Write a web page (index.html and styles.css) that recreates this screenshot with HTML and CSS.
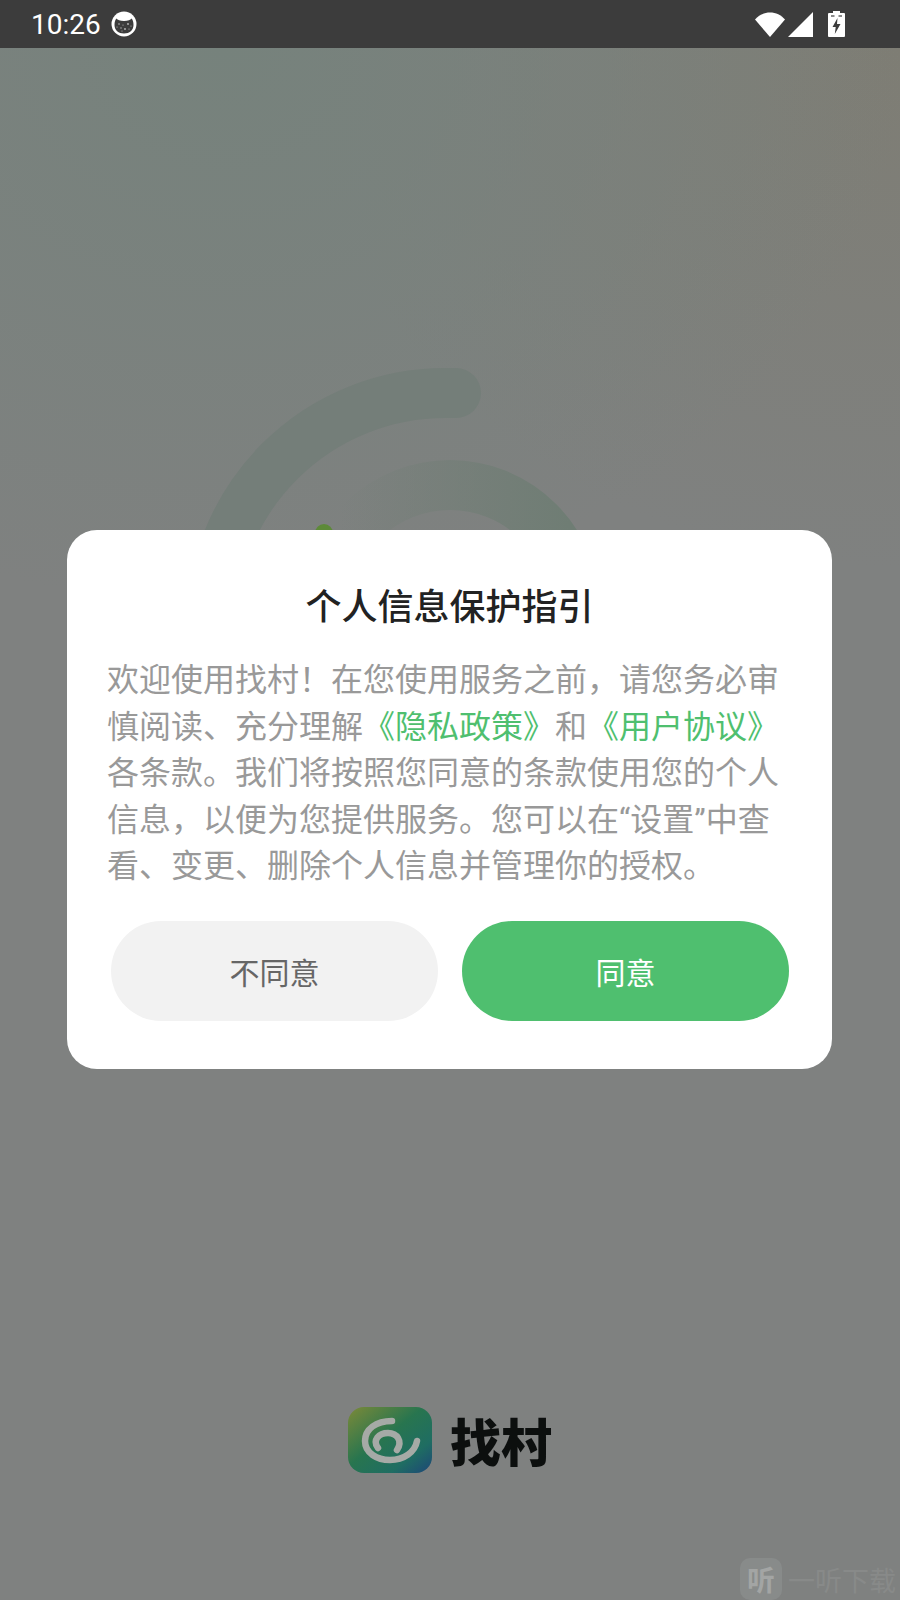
FILE: index.html
```html
<!DOCTYPE html>
<html lang="zh-Hans">
<head>
    <meta charset="UTF-8">
    <meta name="viewport" content="width=device-width, initial-scale=1.0">
    <title>找村</title>
    <link rel="stylesheet" href="styles.css">
</head>
<body>
    <div class="phone">
        <!-- Status bar -->
        <div class="status-bar">
            <div class="status-left">
                <span class="status-time">10:26</span>
                <svg class="status-cat" width="26" height="26" viewBox="0 0 26 26">
                    <circle cx="13" cy="13" r="12.5" fill="#fff"/>
                    <path d="M3.500 14c0-3 .8-5.500 2-6.500 1 1.500 3.500 2.500 7.500 2.500s6.500-1 7.500-2.500c1.200 1 2 3.500 2 6.500 0 5-4 8.500-9.500 8.500s-9.500-3.500-9.500-8.500z" fill="#3c3c3c"/>
                    <g fill="#bbb">
                        <circle cx="8" cy="13" r=".8"/>
                        <circle cx="12" cy="14" r=".6"/>
                        <circle cx="17" cy="13" r=".9"/>
                        <circle cx="20" cy="15" r=".6"/>
                        <circle cx="6" cy="16" r=".6"/>
                        <circle cx="10" cy="17" r=".7"/>
                        <circle cx="14" cy="18" r=".9"/>
                        <circle cx="18" cy="18" r=".6"/>
                        <circle cx="11" cy="20" r=".6"/>
                    </g>
                </svg>
            </div>
            <div class="status-right">
                <svg width="30" height="25" viewBox="0 0 30 25">
                    <path d="M0 7.500C4 3 9 0.500 15 0.500s11 2.500 15 7L15 25z" fill="#fff"/>
                </svg>
                <svg width="25" height="25" viewBox="0 0 25 25">
                    <path d="M25 0v25H0z" fill="#fff"/>
                </svg>
                <svg width="17" height="26" viewBox="0 0 17 26">
                    <path d="M5 0h7v2h4a1 1 0 0 1 1 1v22a1 1 0 0 1-1 1H1a1 1 0 0 1-1-1V3a1 1 0 0 1 1-1h4z" fill="#fff"/>
                    <path d="M3 4h3.500v2H3zM10.500 4H14v2h-3.500z" fill="#8a8a8a"/>
                    <path d="M9.500 7L4.500 16h3.200L6.800 23l5.700-10H9z" fill="#3c3c3c"/>
                </svg>
            </div>
        </div>

        <!-- Splash behind the dialog -->
        <div class="splash">
            <svg class="splash-art" width="900" height="1552" viewBox="0 48 900 1552">
                <defs>
                    <linearGradient id="ring-fade" x1="340" y1="0" x2="570" y2="0" gradientUnits="userSpaceOnUse">
                        <stop offset="0" stop-color="#6f7d74" stop-opacity="0"/>
                        <stop offset="1" stop-color="#6f7d74"/>
                    </linearGradient>
                </defs>
                <path d="M211 627A234 234 0 0 1 445 393H456" fill="none" stroke="#747e79" stroke-width="50" stroke-linecap="round"/>
                <path d="M325 610A125 125 0 0 1 575 610" fill="none" stroke="url(#ring-fade)" stroke-width="50"/>
                <circle cx="324" cy="533" r="9" fill="#5d8a38"/>
            </svg>
            <div class="brand">
                <svg class="brand-icon" width="84" height="66" viewBox="0 0 84 66">
                    <defs>
                        <linearGradient id="brand-bg" x1="0" y1="0" x2="1" y2="1">
                            <stop offset="0" stop-color="#7c8a38"/>
                            <stop offset="0.45" stop-color="#28754f"/>
                            <stop offset="0.75" stop-color="#1f6d62"/>
                            <stop offset="1" stop-color="#1d4678"/>
                        </linearGradient>
                    </defs>
                    <rect width="84" height="66" rx="16" fill="url(#brand-bg)"/>
                    <g fill="none" stroke="#a6aaa6" stroke-width="6.500" stroke-linecap="round">
                        <path d="M44 14C28 14 17 22 17 34C17 46 29 53 42 53C56 53 67 45 69 34"/>
                        <path d="M30 41C24 33 31 26 40 26C49 26 55 34 49 43"/>
                    </g>
                </svg>
                <span class="brand-name">找村</span>
            </div>
        </div>

        <!-- Watermark -->
        <div class="watermark">
            <span class="watermark-icon">听</span>
            <span class="watermark-text">一听下载</span>
        </div>

        <!-- Privacy dialog -->
        <div class="dialog">
            <h1 class="dialog-title">个人信息保护指引</h1>
            <p class="dialog-text">欢迎使用找村！在您使用服务之前，请您务必审慎阅读、充分理解<span class="link">《隐私政策》</span>和<span class="link">《用户协议》</span>各条款。我们将按照您同意的条款使用您的个人信息，以便为您提供服务。您可以在<span class="quote">“</span>设置<span class="quote">”</span>中查看、变更、删除个人信息并管理你的授权。</p>
            <div class="dialog-buttons">
                <button class="btn btn-decline">不同意</button>
                <button class="btn btn-accept">同意</button>
            </div>
        </div>
    </div>
</body>
</html>
```

FILE: styles.css
```css
* {
    box-sizing: border-box;
}

body {
    margin: 0;
    font-family: "Noto Sans CJK SC", "Noto Sans", sans-serif;
    background-color: #808080;
}

.phone {
    position: relative;
    width: 900px;
    height: 1600px;
    overflow: hidden;
    display: flex;
    flex-direction: column;
}

/* Status bar */
.status-bar {
    height: 48px;
    flex-shrink: 0;
    background-color: #3c3c3c;
    display: flex;
    justify-content: space-between;
    align-items: center;
    padding: 0 55px 0 31px;
}

.status-left {
    display: flex;
    align-items: center;
    gap: 10px;
}

.status-time {
    font-family: Roboto, sans-serif;
    font-size: 28px;
    color: #fff;
}

.status-right {
    display: flex;
    align-items: center;
    gap: 3px;
}

.status-right svg:last-child {
    margin-left: 12px;
}

/* Splash */
.splash {
    position: relative;
    flex: 1;
    display: flex;
    justify-content: center;
    align-items: flex-end;
    padding: 0 0 127px 0;
    background-color: #7f8180;
    background-image: radial-gradient(ellipse 680px 560px at 25% 0, #76827c 0%, rgba(118, 130, 124, 0) 100%),
        radial-gradient(ellipse 600px 520px at 100% 0, #7e7d74 0%, rgba(126, 125, 116, 0) 100%);
}

.splash-art {
    position: absolute;
    left: 0;
    top: 0;
}

.brand {
    position: relative;
    display: flex;
    align-items: center;
    gap: 18px;
}

.brand-name {
    font-size: 51px;
    font-weight: 900;
    line-height: 64px;
    color: #0c0f0e;
}

/* Watermark */
.watermark {
    position: absolute;
    left: 740px;
    bottom: 0;
    display: flex;
    align-items: center;
    gap: 6px;
    height: 42px;
}

.watermark-icon {
    width: 42px;
    height: 42px;
    border-radius: 10px;
    background-color: #888b8a;
    color: #a3a5a4;
    font-size: 28px;
    font-weight: 700;
    line-height: 42px;
    text-align: center;
}

.watermark-text {
    font-size: 27px;
    color: #888a89;
    white-space: nowrap;
}

/* Dialog */
.dialog {
    position: absolute;
    left: 67px;
    top: 530px;
    width: 765px;
    height: 539px;
    background-color: #fff;
    border-radius: 30px;
    padding: 45px 40px 0 40px;
}

.dialog-title {
    margin: 0;
    font-size: 36px;
    font-weight: 500;
    line-height: 58px;
    color: #222;
    text-align: center;
}

.dialog-text {
    margin: 21px 0 0 0;
    width: 680px;
    font-size: 32px;
    line-height: 46.6px;
    color: #999;
}

.link {
    color: #4fbf6f;
}

.quote {
    font-family: Roboto, sans-serif;
    line-height: 1;
}

.dialog-buttons {
    display: flex;
    gap: 24px;
    margin: 34px 0 0 4px;
}

.btn {
    width: 327px;
    height: 100px;
    border: none;
    border-radius: 50px;
    font-family: inherit;
    font-size: 30px;
}

.btn-decline {
    background-color: #f2f2f2;
    color: #666;
}

.btn-accept {
    background-color: #4fbf6f;
    color: #fff;
}
```
